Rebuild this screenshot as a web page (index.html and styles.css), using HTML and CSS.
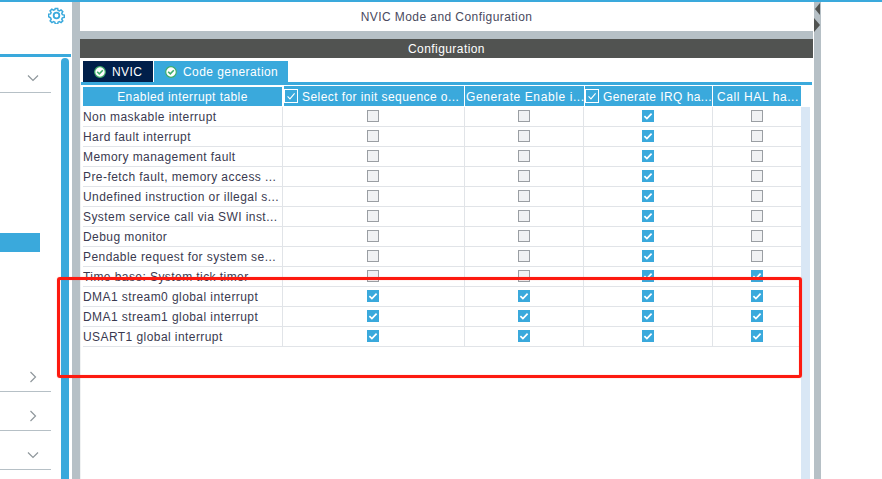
FILE: index.html
```html
<!DOCTYPE html>
<html lang="en">
<head>
  <meta charset="UTF-8">
  <title>NVIC Mode and Configuration</title>
  <link rel="stylesheet" href="styles.css">
</head>
<body>
  <div class="app">
    <aside class="sidebar">
      <div class="sidebar-top">
        <svg class="gear" viewBox="0 0 18 18" width="17" height="17" fill="none" stroke="#3aa9dc" stroke-width="1.7">
          <path d="M7.6 1h2.8l.4 2.2 1.5.7 1.9-1.2 2 2-1.2 1.9.7 1.5 2.2.4v2.8l-2.2.4-.7 1.5 1.2 1.9-2 2-1.9-1.2-1.5.7-.4 2.2H7.6l-.4-2.2-1.5-.7-1.9 1.2-2-2 1.2-1.9-.7-1.5L0 10.4V7.6l2.2-.4.7-1.5-1.2-1.9 2-2 1.9 1.2 1.5-.7z" transform="translate(.6 .6) scale(.93)"/>
          <circle cx="9" cy="9" r="3" stroke-width="1.9"/>
        </svg>
      </div>
      <div class="sidebar-body">
        <div class="tree">
          <div class="tree-row first"><svg class="chev" viewBox="0 0 12 12"><path d="M1 3.5l5 5 5-5"/></svg></div>
          <div class="tree-selected"></div>
          <div class="tree-row"><svg class="chev" viewBox="0 0 12 12"><path d="M3.5 1l5 5-5 5"/></svg></div>
          <div class="tree-row"><svg class="chev" viewBox="0 0 12 12"><path d="M3.5 1l5 5-5 5"/></svg></div>
          <div class="tree-row"><svg class="chev" viewBox="0 0 12 12"><path d="M1 3.5l5 5 5-5"/></svg></div>
        </div>
        <div class="side-thumb"></div>
      </div>
    </aside>

    <div class="splitter"></div>

    <main class="center">
      <div class="mode-title">NVIC Mode and Configuration</div>
      <div class="band"></div>
      <div class="config-title">Configuration</div>

      <div class="tabs">
        <div class="tab tab-dark">
          <svg class="ok" viewBox="0 0 12 12"><circle cx="6" cy="6" r="5.3" fill="#fff" stroke="#3fae6a" stroke-width="1.2"/><path d="M3.2 5.8l2.1 2.1 3.5-3.6" fill="none" stroke="#3fae6a" stroke-width="1.6"/></svg>
          NVIC
        </div>
        <div class="tab">
          <svg class="ok" viewBox="0 0 12 12"><circle cx="6" cy="6" r="5.3" fill="#fff" stroke="#3fae6a" stroke-width="1.2"/><path d="M3.2 5.8l2.1 2.1 3.5-3.6" fill="none" stroke="#3fae6a" stroke-width="1.6"/></svg>
          Code generation
        </div>
      </div>

      <div class="table-wrap">
        <div class="table">
          <div class="row head">
            <div class="th th-first">Enabled interrupt table</div>
            <div class="th th-check"><span class="head-box"><svg viewBox="0 0 14 14"><path d="M3 7.5l2.8 2.8 5.4-6.3"/></svg></span><span class="th-text">Select for init sequence o...</span></div>
            <div class="th th-plain">Generate Enable i...</div>
            <div class="th th-check"><span class="head-box"><svg viewBox="0 0 14 14"><path d="M3 7.5l2.8 2.8 5.4-6.3"/></svg></span><span class="th-text">Generate IRQ ha...</span></div>
            <div class="th th-plain th-last">Call HAL ha...</div>
          </div>
          <div id="rows"></div>
        </div>
        <div class="track"></div>
      </div>
    </main>

    <div class="splitter right-splitter">
      <span class="arrow arrow-left"></span>
      <span class="arrow arrow-right"></span>
    </div>
    <div class="blank"></div>
  </div>

  <div class="red-box"></div>

  <script src="rows.js"></script>
</body>
</html>
```

FILE: rows.js
```js
const data = [
  ["Non maskable interrupt", 0, 0, 1, 0],
  ["Hard fault interrupt", 0, 0, 1, 0],
  ["Memory management fault", 0, 0, 1, 0],
  ["Pre-fetch fault, memory access ...", 0, 0, 1, 0],
  ["Undefined instruction or illegal s...", 0, 0, 1, 0],
  ["System service call via SWI inst...", 0, 0, 1, 0],
  ["Debug monitor", 0, 0, 1, 0],
  ["Pendable request for system se...", 0, 0, 1, 0],
  ["Time base: System tick timer", 0, 0, 1, 1],
  ["DMA1 stream0 global interrupt", 1, 1, 1, 1],
  ["DMA1 stream1 global interrupt", 1, 1, 1, 1],
  ["USART1 global interrupt", 1, 1, 1, 1]
];

const tick = '<svg viewBox="0 0 12 12"><path d="M2.4 6.2l2.5 2.4 4.7-5"/></svg>';

document.getElementById("rows").innerHTML = data.map(r => {
  const cells = r.slice(1).map(on =>
    `<div class="td td-box"><span class="box${on ? " on" : ""}">${on ? tick : ""}</span></div>`
  ).join("");
  return `<div class="row"><div class="td td-name">${r[0]}</div>${cells}</div>`;
}).join("");
```

FILE: styles.css
```css
* {
  box-sizing: border-box;
}

html, body {
  margin: 0;
  height: 100%;
  overflow: hidden;
}

body {
  font-family: "Liberation Sans", Arial, sans-serif;
  font-size: 12px;
  letter-spacing: 0.43px;
  color: #3a3a50;
  background: #fff;
}

.app {
  display: flex;
  height: 479px;
  border-top: 2px solid #3aa9dc;
}

/* left tree */
.sidebar {
  width: 72px;
  display: flex;
  flex-direction: column;
}

.sidebar-top {
  height: 55px;
  border-bottom: 3px solid #3aa9dc;
  width: 71px;
  display: flex;
  justify-content: flex-end;
  padding: 5px 6px 0 0;
}

.gear {
  display: block;
}

.sidebar-body {
  flex: 1;
  display: flex;
  min-height: 0;
}

.tree {
  width: 51px;
  margin-right: 10px;
}

.tree-row {
  height: 39px;
  border-bottom: 1px solid #b6c0c6;
  position: relative;
}

.tree-row.first {
  height: 36px;
}

.chev {
  position: absolute;
  right: 12px;
  bottom: 8px;
  width: 12px;
  height: 12px;
  fill: none;
  stroke: #8f979c;
  stroke-width: 1.2;
}

.tree-selected {
  width: 40px;
  height: 19px;
  margin-top: 140px;
  margin-bottom: 101px;
  background: #3aa9dc;
}

.side-thumb {
  width: 8px;
  margin-top: 1px;
  background: #3aa9dc;
  border-radius: 4px 4px 0 0;
}

.splitter {
  width: 8px;
  background: #b6c0c6;
  flex-shrink: 0;
}

/* centre panel */
.center {
  width: 733px;
  margin-right: 1px;
  display: flex;
  flex-direction: column;
  flex-shrink: 0;
}

.mode-title {
  height: 29px;
  text-align: center;
  line-height: 31px;
  color: #4a4a5e;
}

.band {
  height: 8px;
  background: #b6c0c6;
}

.config-title {
  height: 19px;
  line-height: 21px;
  text-align: center;
  color: #fff;
  background: #515351;
}

.tabs {
  display: flex;
  height: 21px;
  margin-top: 3px;
  padding-left: 3px;
  gap: 1px;
}

.tab {
  display: flex;
  align-items: center;
  gap: 6px;
  padding-left: 11px;
  width: 134px;
  background: #3aa9dc;
  color: #fff;
}

.tab-dark {
  width: 70px;
  background: #001f4a;
}

.ok {
  width: 12px;
  height: 12px;
}

.table-wrap {
  flex: 1;
  display: flex;
  align-items: stretch;
  border-top: 3px solid #3aa9dc;
  margin: 0 1px;
  padding-left: 2px;
  min-height: 0;
  box-shadow: -1px 0 0 #f0f2f3;
}

.table {
  width: 718px;
}

.row {
  display: grid;
  grid-template-columns: 200px 182px 119px 129px 88px;
  height: 20px;
}

.row.head {
  height: 22px;
}

.th {
  background: #3aa9dc;
  color: #fff;
  display: flex;
  align-items: center;
  white-space: nowrap;
  overflow: hidden;
  padding-top: 1px;
}

.th-first {
  justify-content: center;
  margin: 2px 1px 1px 0;
}

.th-check {
  border: 1px solid #fff;
  padding: 0;
  gap: 4px;
}

.th-text {
  padding-top: 1px;
}

.th-plain {
  margin: 1px 0;
  padding-left: 1px;
  letter-spacing: 0.6px;
}

.th-last {
  padding-left: 4px;
}

.head-box {
  width: 14px;
  height: 14px;
  flex-shrink: 0;
  border: 1px solid #fff;
  display: flex;
}

.head-box svg {
  width: 12px;
  height: 12px;
  fill: none;
  stroke: #fff;
  stroke-width: 1.3;
}

.td {
  border-bottom: 1px solid #e1e4e8;
  border-right: 1px solid #e1e4e8;
  height: 20px;
}

.td:last-child {
  border-right: 0;
}

.td-name {
  line-height: 21px;
  white-space: nowrap;
  overflow: hidden;
}

.td-box {
  display: flex;
  justify-content: center;
  padding-top: 3px;
}

.td-box:nth-child(2) {
  padding-right: 1px;
}

.box {
  width: 12px;
  height: 12px;
  display: block;
  border: 1px solid #9a9ea3;
  background: #f0f1f3;
}

.box.on {
  border: 0;
  background: #3aa9dc;
}

.box svg {
  display: block;
  width: 12px;
  height: 12px;
  fill: none;
  stroke: #fff;
  stroke-width: 1.7;
}

.track {
  width: 9px;
  margin-top: 22px;
  background: #d9e7f5;
}

/* right splitter */
.right-splitter {
  width: 7px;
  position: relative;
}

.arrow {
  position: absolute;
  width: 0;
  height: 0;
  border-style: solid;
}

.arrow-left {
  left: 1px;
  top: 1px;
  border-width: 6px 5px 6px 0;
  border-color: transparent #515351 transparent transparent;
}

.arrow-right {
  left: 0;
  top: 16px;
  border-width: 7px 0 7px 6px;
  border-color: transparent transparent transparent #515351;
}

.blank {
  flex: 1;
}

/* red annotation */
.red-box {
  position: absolute;
  left: 57px;
  top: 277px;
  width: 745px;
  height: 101px;
  border: 3px solid #fd1a10;
  border-radius: 3px;
  box-shadow: 0 0 1px rgba(255, 40, 30, 0.6), inset 0 0 1px rgba(255, 40, 30, 0.6);
}
```
